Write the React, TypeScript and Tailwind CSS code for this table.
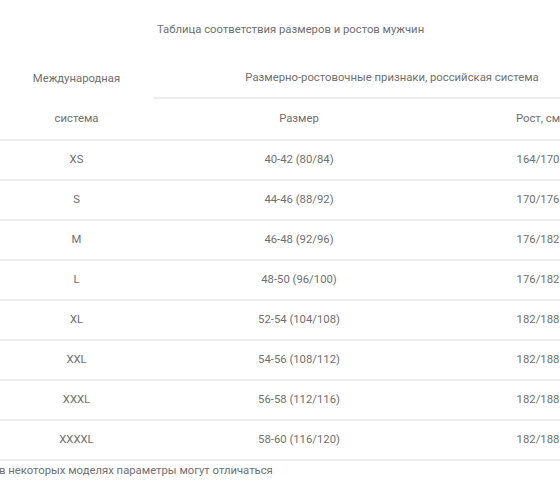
const rows = [
  { intl: 'XS', size: '40-42 (80/84)', height: '164/170' },
  { intl: 'S', size: '44-46 (88/92)', height: '170/176' },
  { intl: 'M', size: '46-48 (92/96)', height: '176/182' },
  { intl: 'L', size: '48-50 (96/100)', height: '176/182' },
  { intl: 'XL', size: '52-54 (104/108)', height: '182/188' },
  { intl: 'XXL', size: '54-56 (108/112)', height: '182/188' },
  { intl: 'XXXL', size: '56-58 (112/116)', height: '182/188' },
  { intl: 'XXXXL', size: '58-60 (116/120)', height: '182/188' },
];

export default function App() {
  return (
    <div className="w-[560px] h-[504px] overflow-hidden bg-white font-['Roboto',sans-serif] text-[11.3px] text-[#6f6f6f]">
      <div className="h-[59px] pl-[157px] pt-[22px]">Таблица соответствия размеров и ростов мужчин</div>

      <div className="w-[631px]">
        {/* header */}
        <div className="grid grid-cols-[153px_292px_186px]">
          <div className="h-[40px] flex items-center justify-center">Международная</div>
          <div className="col-span-2 h-[40px] flex items-center justify-center border-b-2 border-[#ededed]">
            Размерно-ростовочные признаки, российская система
          </div>
        </div>
        <div className="grid grid-cols-[153px_292px_186px] border-b-2 border-[#ededed]">
          <div className="h-[40px] flex items-center justify-center">система</div>
          <div className="h-[40px] flex items-center justify-center">Размер</div>
          <div className="h-[40px] flex items-center justify-center">Рост, см</div>
        </div>

        {/* body */}
        {rows.map((r) => (
          <div key={r.intl} className="grid grid-cols-[153px_292px_186px] border-b-2 border-[#ededed]">
            <div className="h-[38px] flex items-center justify-center">{r.intl}</div>
            <div className="h-[38px] flex items-center justify-center">{r.size}</div>
            <div className="h-[38px] flex items-center justify-center">{r.height}</div>
          </div>
        ))}
      </div>

      <div className="pt-[2px] -ml-[1px]">в некоторых моделях параметры могут отличаться</div>
    </div>
  );
}
